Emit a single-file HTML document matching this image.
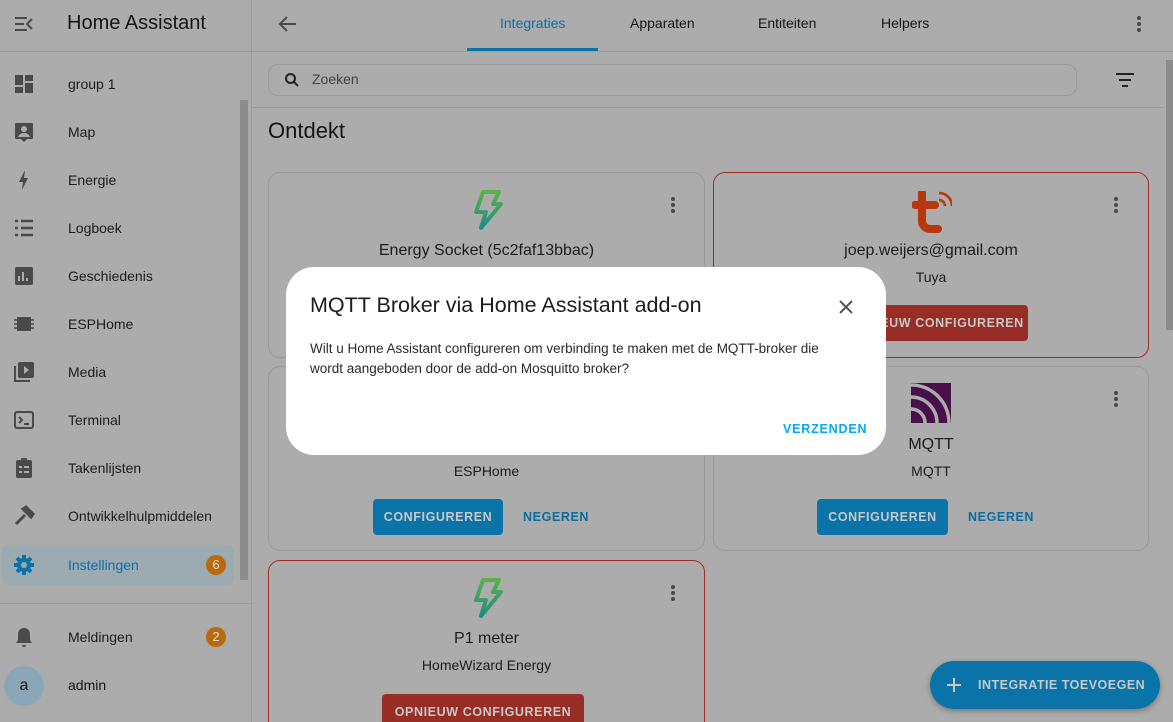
<!DOCTYPE html>
<html><head><meta charset="utf-8"><style>
*{box-sizing:border-box;margin:0;padding:0}
html,body{width:1173px;height:722px;overflow:hidden}
body{background:#acacac;font-family:"Liberation Sans",Roboto,sans-serif;color:#151515;position:relative}
.abs{position:absolute}
.sb{left:0;top:0;width:252px;height:722px;border-right:1px solid #9c9c9c}
.item{position:absolute;left:0;width:240px;height:40px;font-size:14px;color:#1c1c1c}
.item span{position:absolute;left:68px;top:12px}
.item svg{position:absolute;left:12px;top:8px}
.badge{position:absolute;left:206px;top:10px;width:20px;height:20px;border-radius:10px;background:#b96a0b;color:#dcdcdc;font-size:13px;text-align:center;line-height:20px}
.card{position:absolute;border:1px solid #9a9a9a;border-radius:12px;text-align:center;overflow:hidden}
.card.red{border-color:#9e2d24}
.t1{position:absolute;width:100%;font-size:16px;color:#1c1c1c}
.t2{position:absolute;width:100%;font-size:14px;color:#1c1c1c}
.btn{position:absolute;height:36px;border-radius:4px;font-size:12.5px;font-weight:700;letter-spacing:.6px;color:#c8c8c8;line-height:36px;text-align:center;white-space:nowrap}
.blue{background:#0a74a8}
.redb{background:#982d25}
.ng{position:absolute;font-size:12.5px;font-weight:700;letter-spacing:.6px;color:#0a6da0}
.dots{position:absolute;width:4px}
.dots i{display:block;width:4px;height:4px;border-radius:2px;background:#4a4a4a;margin-bottom:2px}
</style></head><body>
<div class="abs sb">
 <svg class="abs" style="left:14px;top:15px" width="20" height="18" viewBox="0 0 20 18"><path d="M1 3h12M1 9h9M1 15h12M18 4l-5 5 5 5" stroke="#4a4a4a" stroke-width="2" fill="none"/></svg>
 <div class="abs" style="left:67px;top:12px;font-size:20px;color:#151515">Home Assistant</div>
 <div class="abs" style="left:0;top:51px;width:252px;border-top:1px solid #9c9c9c"></div>
 <div class="abs" style="left:240px;top:100px;width:8px;height:480px;background:#8c8c8c"></div>
 <div class="item" style="top:64px"><svg width="24" height="24"><path d="M3 3h8v10H3zM13 3h8v6h-8zM13 11h8v10h-8zM3 15h8v6H3z" fill="#4a4a4a"/></svg><span>group 1</span></div>
 <div class="item" style="top:112px"><svg width="24" height="24"><path d="M4 3h16a1 1 0 011 1v14a1 1 0 01-1 1h-5l-3 3-3-3H4a1 1 0 01-1-1V4a1 1 0 011-1z" fill="#4a4a4a"/><circle cx="12" cy="9" r="3" fill="#acacac"/><path d="M6 17c1-3 4-4 6-4s5 1 6 4z" fill="#acacac"/></svg><span>Map</span></div>
 <div class="item" style="top:160px"><svg width="24" height="24"><path d="M13 2L7 14h4l-1 8 6-12h-4z" fill="#4a4a4a"/></svg><span>Energie</span></div>
 <div class="item" style="top:208px"><svg width="24" height="24"><path d="M3 5h3M9 5h12M3 12h3M9 12h12M3 19h3M9 19h12" stroke="#4a4a4a" stroke-width="2.4"/></svg><span>Logboek</span></div>
 <div class="item" style="top:256px"><svg width="24" height="24"><rect x="3" y="3" width="18" height="18" rx="2" fill="#4a4a4a"/><path d="M7 17v-5M11 17V8M15 17v-3" stroke="#acacac" stroke-width="2"/></svg><span>Geschiedenis</span></div>
 <div class="item" style="top:304px"><svg width="24" height="24"><rect x="5" y="5" width="14" height="14" fill="#4a4a4a"/><path d="M2 8h3M2 12h3M2 16h3M19 8h3M19 12h3M19 16h3" stroke="#4a4a4a" stroke-width="1.5"/></svg><span>ESPHome</span></div>
 <div class="item" style="top:352px"><svg width="24" height="24"><path d="M2 6v16h16v-2H4V6z" fill="#4a4a4a"/><rect x="6" y="2" width="16" height="16" rx="2" fill="#4a4a4a"/><path d="M12 6v8l5-4z" fill="#acacac"/></svg><span>Media</span></div>
 <div class="item" style="top:400px"><svg width="24" height="24"><rect x="3" y="4" width="18" height="16" rx="2" fill="none" stroke="#4a4a4a" stroke-width="2"/><path d="M7 9l3 3-3 3M12 16h5" stroke="#4a4a4a" stroke-width="2" fill="none"/></svg><span>Terminal</span></div>
 <div class="item" style="top:448px"><svg width="24" height="24"><rect x="4" y="4" width="16" height="18" rx="2" fill="#4a4a4a"/><rect x="9" y="2" width="6" height="4" rx="1" fill="#4a4a4a"/><path d="M7 11h3M12 11h5M7 16h3M12 16h5" stroke="#acacac" stroke-width="2"/></svg><span>Takenlijsten</span></div>
 <div class="item" style="top:496px"><svg width="24" height="24"><path d="M4 20l9-9M11 5l3-2 7 7-2 3z" stroke="#4a4a4a" stroke-width="3" fill="#4a4a4a"/></svg><span>Ontwikkelhulpmiddelen</span></div>
 <div class="item" style="top:545px;left:2px;width:232px;background:#9cabb2;border-radius:6px"><svg width="24" height="24" style="left:10px"><circle cx="12" cy="12" r="7" fill="#0d72a6"/><path d="M12 2v20M2 12h20M5 5l14 14M19 5L5 19" stroke="#0d72a6" stroke-width="4"/><circle cx="12" cy="12" r="3" fill="#9cabb2"/></svg><span style="left:66px;color:#0f6fa3">Instellingen</span><div class="badge" style="left:204px">6</div></div>
 <div class="abs" style="left:0;top:603px;width:252px;border-top:1px solid #9c9c9c"></div>
 <div class="item" style="top:617px"><svg width="24" height="24"><path d="M12 3a6 6 0 00-6 6v6l-2 3h16l-2-3V9a6 6 0 00-6-6zM10 20h4a2 2 0 01-4 0z" fill="#4a4a4a"/></svg><span>Meldingen</span><div class="badge">2</div></div>
 <div class="abs" style="left:4px;top:666px;width:40px;height:40px;border-radius:20px;background:#8aa7b8;text-align:center;line-height:40px;font-size:16px">a</div>
 <div class="abs" style="left:68px;top:677px;font-size:14px">admin</div>
</div>
<svg class="abs" style="left:278px;top:14px" width="20" height="20"><path d="M18 10H3M9 3L2 10l7 7" stroke="#4a4a4a" stroke-width="2" fill="none"/></svg>
<div class="abs" style="left:500px;top:15px;font-size:14px;color:#0d6fa4">Integraties</div>
<div class="abs" style="left:467px;top:48px;width:131px;height:3px;background:#0d72a6"></div>
<div class="abs" style="left:630px;top:15px;font-size:14px">Apparaten</div>
<div class="abs" style="left:758px;top:15px;font-size:14px">Entiteiten</div>
<div class="abs" style="left:881px;top:15px;font-size:14px">Helpers</div>
<div class="dots" style="left:1137px;top:16px"><i></i><i></i><i></i></div>
<div class="abs" style="left:252px;top:51px;width:921px;border-top:1px solid #9c9c9c"></div>
<div class="abs" style="left:268px;top:64px;width:809px;height:32px;border:1px solid #9c9c9c;border-radius:10px"></div>
<svg class="abs" style="left:284px;top:72px" width="16" height="16"><circle cx="6.5" cy="6.5" r="4.5" stroke="#222" stroke-width="2" fill="none"/><path d="M10 10l4 4" stroke="#222" stroke-width="2"/></svg>
<div class="abs" style="left:312px;top:71px;font-size:14px;color:#444">Zoeken</div>
<svg class="abs" style="left:1116px;top:73px" width="18" height="14"><path d="M0 1h18M3 7h12M6 13h6" stroke="#222" stroke-width="2"/></svg>
<div class="abs" style="left:252px;top:107px;width:912px;border-top:1px solid #9c9c9c"></div>
<div class="abs" style="left:1166px;top:60px;width:7px;height:270px;background:#8c8c8c"></div>
<div class="abs" style="left:268px;top:118px;font-size:22px">Ontdekt</div>

<svg width="0" height="0" class="abs"><defs><linearGradient id="g" x1="0" y1="0" x2="0" y2="1"><stop offset="0" stop-color="#5ab248"/><stop offset="1" stop-color="#1f8c88"/></linearGradient></defs></svg>
<div class="card" style="left:268px;top:172px;width:437px;height:186px">
 <svg class="abs" style="left:202px;top:17px" width="32" height="40" viewBox="0 0 32 40"><path d="M12 2h16l-6 12h8L10 38l5-16H5z" fill="none" stroke="url(#g)" stroke-width="4" stroke-linejoin="round"/></svg>
 <div class="t1" style="top:69px">Energy Socket (5c2faf13bbac)</div>
 <div class="dots" style="left:402px;top:24px"><i></i><i></i><i></i></div>
</div>
<div class="card red" style="left:713px;top:172px;width:436px;height:186px">
 <svg class="abs" style="left:198px;top:18px" width="40" height="42" viewBox="0 0 40 42"><path d="M10 2v28a8 8 0 008 8h8M3 14h20" stroke="#b6380c" stroke-width="8" stroke-linecap="round" fill="none"/><path d="M27 9a6 6 0 016 6M27 2a13 13 0 0113 13" stroke="#b6380c" stroke-width="2.6" fill="none"/></svg>
 <div class="t1" style="top:69px">joep.weijers@gmail.com</div>
 <div class="t2" style="top:96px">Tuya</div>
 <div class="btn redb" style="left:129px;top:132px;width:185px">OPNIEUW CONFIGUREREN</div>
 <div class="dots" style="left:400px;top:24px"><i></i><i></i><i></i></div>
</div>
<div class="card" style="left:268px;top:366px;width:437px;height:185px">
 <div class="t2" style="top:96px">ESPHome</div>
 <div class="btn blue" style="left:104px;top:132px;width:130px">CONFIGUREREN</div>
 <div class="ng" style="left:254px;top:143px">NEGEREN</div>
</div>
<div class="card" style="left:713px;top:366px;width:436px;height:185px">
 <svg class="abs" style="left:197px;top:16px" width="40" height="40" viewBox="0 0 40 40"><rect width="40" height="40" fill="#48104a"/><path d="M0 14a26 26 0 0126 26M0 2a38 38 0 0138 38M0 26a14 14 0 0114 14" stroke="#acacac" stroke-width="3.5" fill="none"/></svg>
 <div class="t1" style="top:69px">MQTT</div>
 <div class="t2" style="top:96px">MQTT</div>
 <div class="btn blue" style="left:103px;top:132px;width:131px">CONFIGUREREN</div>
 <div class="ng" style="left:254px;top:143px">NEGEREN</div>
 <div class="dots" style="left:400px;top:24px"><i></i><i></i><i></i></div>
</div>
<div class="card red" style="left:268px;top:560px;width:437px;height:180px">
 <svg class="abs" style="left:202px;top:17px" width="32" height="40" viewBox="0 0 32 40"><path d="M12 2h16l-6 12h8L10 38l5-16H5z" fill="none" stroke="url(#g)" stroke-width="4" stroke-linejoin="round"/></svg>
 <div class="t1" style="top:69px">P1 meter</div>
 <div class="t2" style="top:96px">HomeWizard Energy</div>
 <div class="btn redb" style="left:113px;top:133px;width:202px">OPNIEUW CONFIGUREREN</div>
 <div class="dots" style="left:402px;top:24px"><i></i><i></i><i></i></div>
</div>
<div class="abs" style="left:930px;top:661px;width:230px;height:48px;border-radius:24px;background:#0a74a8;box-shadow:0 2px 6px rgba(0,0,0,.3)">
 <svg class="abs" style="left:17px;top:17px" width="14" height="14"><path d="M7 0v14M0 7h14" stroke="#c8c8c8" stroke-width="2"/></svg>
 <div class="abs" style="left:48px;top:17px;font-size:12.5px;font-weight:700;letter-spacing:.5px;color:#c8c8c8;white-space:nowrap">INTEGRATIE TOEVOEGEN</div>
</div>

<div class="abs" style="left:286px;top:267px;width:600px;height:188px;background:#fff;border-radius:28px">
 <div class="abs" style="left:24px;top:26px;font-size:21.5px;color:#1c1c1c">MQTT Broker via Home Assistant add-on</div>
 <svg class="abs" style="left:553px;top:33px" width="14" height="14"><path d="M1 1l12 12M13 1L1 13" stroke="#555" stroke-width="2"/></svg>
 <div class="abs" style="left:24px;top:72px;font-size:13.5px;line-height:20px;color:#2a2a2a;width:530px">Wilt u Home Assistant configureren om verbinding te maken met de MQTT-broker die wordt aangeboden door de add-on Mosquitto broker?</div>
 <div class="abs" style="left:497px;top:155px;font-size:12.5px;font-weight:700;letter-spacing:.8px;color:#03a9f4">VERZENDEN</div>
</div>
</body></html>
